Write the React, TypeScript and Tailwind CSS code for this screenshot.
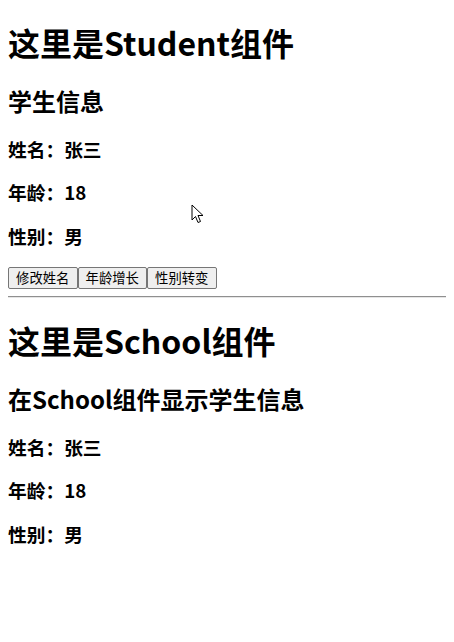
import React from 'react';

const font = "font-['Noto_Sans_CJK_SC','Microsoft_YaHei',sans-serif]";

const InfoLine = ({ label, value }: { label: string; value: string | number }) => (
  <h3 className="my-[18.72px] text-[18.72px] font-bold leading-[24.7px]">
    {label}：{value}
  </h3>
);

const Student = () => {
  const student = { name: '张三', age: 18, sex: '男' };

  return (
    <div>
      <h1 className="mb-[21.44px] text-[32px] font-bold leading-[42px]">这里是Student组件</h1>
      <h2 className="my-[19.92px] text-[24px] font-bold leading-[32px]">学生信息</h2>
      <InfoLine label="姓名" value={student.name} />
      <InfoLine label="年龄" value={student.age} />
      <InfoLine label="性别" value={student.sex} />
      <div className="flex">
        {['修改姓名', '年龄增长', '性别转变'].map((text) => (
          <button
            key={text}
            className="flex h-[22px] w-[69.5px] items-center justify-center rounded-[2px] border border-[#767676] bg-[#efefef] px-[6px] text-[13.33px] leading-none text-black"
          >
            {text}
          </button>
        ))}
      </div>
    </div>
  );
};

const School = () => (
  <div>
    <h1 className="my-[21.44px] text-[32px] font-bold leading-[42px]">这里是School组件</h1>
    <h2 className="my-[19.92px] text-[24px] font-bold leading-[32px]">在School组件显示学生信息</h2>
    <InfoLine label="姓名" value="张三" />
    <InfoLine label="年龄" value={18} />
    <InfoLine label="性别" value="男" />
  </div>
);

export default function App() {
  return (
    <div className={`relative min-h-[642px] w-full bg-white px-2 pt-[21.44px] text-black ${font}`}>
      <Student />
      <hr className="mt-[7px] h-[2px] border-0 border-t border-b border-t-[#8f8f8f] border-b-[#e6e6e6]" />
      <School />

      {/* mouse pointer captured in the screenshot */}
      <svg
        className="absolute left-[191px] top-[204px]"
        width="14"
        height="21"
        viewBox="0 0 14 21"
      >
        <path
          d="M1 1 L1 16 L4.5 12.5 L7 18.5 L9.5 17.5 L7 11.5 L12 11.5 Z"
          fill="white"
          stroke="black"
          strokeWidth="1"
          strokeLinejoin="miter"
        />
      </svg>
    </div>
  );
}
